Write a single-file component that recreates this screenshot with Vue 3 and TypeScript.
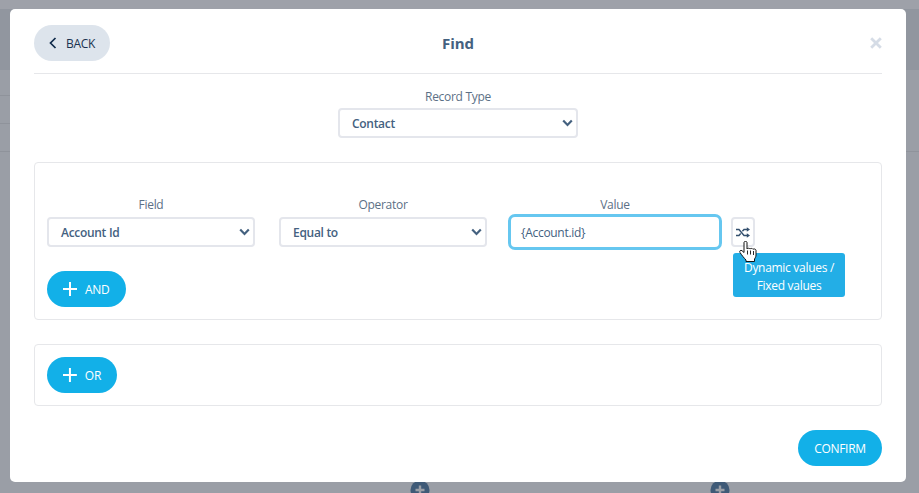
<script setup lang="ts">
const conditions = [
  { label: 'Field', value: 'Account Id' },
  { label: 'Operator', value: 'Equal to' },
]
</script>

<template>
  <div class="page">
    <div class="backdrop">
      <div class="bg-strip"></div>
      <div class="bg-top"></div>
      <div class="bg-row tall left"></div>
      <div class="bg-row left"></div>
      <div class="bg-row"></div>
      <span class="bg-plus one"><svg viewBox="0 0 20 20" width="20" height="20"><circle cx="10" cy="10" r="9.5" fill="#3f5a77" /><path d="M10 5.5v9M5.5 10h9" stroke="#9a9ea6" stroke-width="2.4" /></svg></span>
      <span class="bg-plus two"><svg viewBox="0 0 20 20" width="20" height="20"><circle cx="10" cy="10" r="9.5" fill="#3f5a77" /><path d="M10 5.5v9M5.5 10h9" stroke="#9a9ea6" stroke-width="2.4" /></svg></span>
    </div>
    <div class="modal">
      <header class="head">
        <button class="back">
          <svg width="8" height="12" viewBox="0 0 8 12"><path d="M6.500 1 1.500 6l5 5" fill="none" stroke="#0f2a4a" stroke-width="1.7" /></svg>
          <span>BACK</span>
        </button>
        <h1 class="title">Find</h1>
        <svg class="close" width="12" height="12" viewBox="0 0 12 12"><path d="M1.200 1.200l9.600 9.600M10.800 1.200l-9.600 9.600" stroke="#d5dce6" stroke-width="2.800" /></svg>
      </header>

      <div class="record">
        <label class="lbl">Record Type</label>
        <div class="select wide"><span>Contact</span><svg class="chev" width="11" height="8" viewBox="0 0 11 8"><path d="M1.200 1.600 5.500 6l4.300-4.400" fill="none" stroke="#44617f" stroke-width="2.200" /></svg></div>
      </div>

      <section class="panel and-panel">
        <div class="cols">
          <div v-for="c in conditions" :key="c.label" class="col">
            <label class="lbl">{{ c.label }}</label>
            <div class="select"><span>{{ c.value }}</span><svg class="chev" width="11" height="8" viewBox="0 0 11 8"><path d="M1.200 1.600 5.500 6l4.300-4.400" fill="none" stroke="#44617f" stroke-width="2.200" /></svg></div>
          </div>
          <div class="col value-col">
            <label class="lbl">Value</label>
            <div class="input">{Account.id}</div>
          </div>
          <div class="shuffle-wrap">
            <button class="shuffle">
              <svg width="14" height="11" viewBox="0 0 14 11"><path d="M0 2.500h3l5 6h3M0 8.500h3l1.700-2M6.400 4.300 8 2.500h3" fill="none" stroke="#334f6e" stroke-width="1.400" /><path d="M10.800.2l3.200 2.300-3.200 2.300zM10.800 6.200l3.200 2.300-3.200 2.300z" fill="#334f6e" /></svg>
            </button>
            <div class="tip">Dynamic values / Fixed values</div>
            <svg class="cursor" width="18" height="21" viewBox="0 0 18 21"><path d="M5 1.500c0-1.500 3-1.500 3 0V8c.5-1 2.500-1 3 0 .5-.8 2.500-.8 3 .3.500-.6 2.800-.5 3 1V14c0 2-1 3-1.500 4v2.500H7V19C5 17 3 14.500 1 11.500c-1-1.500.8-2.800 2-1.800l2 1.800z" fill="#fff" stroke="#111" stroke-width="1" /><path d="M8.500 9.500v4M11.500 9.500v4M14.500 10v4" stroke="#111" stroke-width=".9" /></svg>
          </div>
        </div>
        <button class="pill add"><svg width="14" height="14" viewBox="0 0 14 14"><path d="M7 0v14M0 7h14" stroke="#fff" stroke-width="2" /></svg><span>AND</span></button>
      </section>

      <section class="panel or-panel">
        <button class="pill add"><svg width="14" height="14" viewBox="0 0 14 14"><path d="M7 0v14M0 7h14" stroke="#fff" stroke-width="2" /></svg><span>OR</span></button>
      </section>

      <footer class="foot">
        <button class="pill confirm">CONFIRM</button>
      </footer>
    </div>
  </div>
</template>

<style>
html, body { margin: 0; background: #9a9ea6; overflow: hidden; }
</style>

<style scoped>
.page {
  position: relative;
  width: 919px;
  height: 493px;
  overflow: hidden;
  padding: 9px 13px 0 10px;
  box-sizing: border-box;
  font-family: "Open Sans", "Liberation Sans", sans-serif;
  letter-spacing: -0.3px;
  background: #9a9ea6;
}
.backdrop { position: absolute; inset: 0; }
.bg-strip { height: 9px; background: #9ea1a9; }
.bg-top { height: 61px; background: #91969f; }
.bg-row { height: 27px; border-bottom: 1px solid #8f939b; }
.bg-row.tall { height: 25px; }
.bg-row.left { width: 40px; }
.bg-plus { position: absolute; top: 480px; display: block; }
.bg-plus.one { left: 410px; }
.bg-plus.two { left: 710px; }
.modal {
  position: relative;
  height: 473px;
  background: #fff;
  border-radius: 5px;
  padding: 16px 24px 0;
  box-sizing: border-box;
  display: flex;
  flex-direction: column;
  color: #44617f;
}
.head {
  position: relative;
  display: flex;
  align-items: center;
  justify-content: center;
  padding-bottom: 12px;
  border-bottom: 1px solid #e6e7ea;
  height: 36px;
}
.back {
  position: absolute;
  left: 0;
  top: 0;
  width: 76px;
  height: 36px;
  border: 0;
  border-radius: 18px;
  background: #dde4ec;
  color: #1b3350;
  font: 12px "Open Sans", sans-serif;
  letter-spacing: -0.3px;
  display: flex;
  align-items: center;
  gap: 9px;
  padding: 0 0 0 15px;
  box-sizing: border-box;
}
.title { margin: 0; font-size: 15px; font-weight: 700; letter-spacing: 0; color: #44617f; }
.close { position: absolute; right: 0; top: 12px; }
.record { display: flex; flex-direction: column; align-items: center; margin-top: 15px; }
.lbl { font-size: 12px; line-height: 16px; color: #5c7086; text-align: center; display: block; margin-bottom: 3px; }
.cols .lbl { margin-bottom: 4px; }
.select {
  height: 30px;
  width: 208px;
  border: 2px solid #e4e6ec;
  border-radius: 4px;
  box-sizing: border-box;
  display: flex;
  align-items: center;
  justify-content: space-between;
  padding: 0 3px 0 12px;
  font-size: 12px;
  font-weight: 600;
  color: #44617f;
  background: #fff;
}
.select.wide { width: 240px; }
.panel {
  border: 1px solid #e6e7ea;
  border-radius: 4px;
  box-sizing: border-box;
  padding: 0 12px;
}
.and-panel { height: 158px; margin-top: 24px; padding-top: 34px; }
.or-panel { height: 62px; margin-top: 24px; padding-top: 12px; }
.cols { display: flex; gap: 24px; align-items: flex-start; }
.col { width: 208px; }
.value-col { width: 214px; margin-left: -3px; }
.input {
  height: 36px;
  margin-top: -3px;
  border: 3px solid #66c7f0;
  border-radius: 7px;
  box-sizing: border-box;
  display: flex;
  align-items: center;
  padding-left: 10px;
  font-size: 12px;
  color: #44617f;
}
.shuffle-wrap { position: relative; margin-left: -15px; padding-top: 20px; }
.shuffle {
  display: flex;
  align-items: center;
  justify-content: center;
  width: 24px;
  height: 30px;
  padding: 0;
  background: #fff;
  border: 2px solid #e4e6ec;
  border-radius: 4px;
  box-sizing: border-box;
}
.tip {
  position: absolute;
  left: 2px;
  top: 56px;
  width: 112px;
  height: 44px;
  padding: 4px 6px 0;
  box-sizing: border-box;
  background: #23aee6;
  border-radius: 3px;
  color: #fff;
  font-size: 12px;
  line-height: 18px;
  text-align: center;
  display: flex;
  align-items: center;
}
.cursor { position: absolute; left: 8px; top: 44px; }
.pill {
  border: 0;
  background: #12b0e8;
  color: #fff;
  height: 36px;
  border-radius: 18px;
  font: 12px "Open Sans", sans-serif;
  letter-spacing: -0.3px;
  display: flex;
  align-items: center;
  box-sizing: border-box;
}
.add { gap: 8px; padding: 0 16px; }
.and-panel .add { margin-top: 21px; width: 79px; }
.or-panel .add { width: 70px; }
.foot { display: flex; justify-content: flex-end; margin-top: 24px; }
.confirm { width: 84px; justify-content: center; padding: 0; }
</style>
